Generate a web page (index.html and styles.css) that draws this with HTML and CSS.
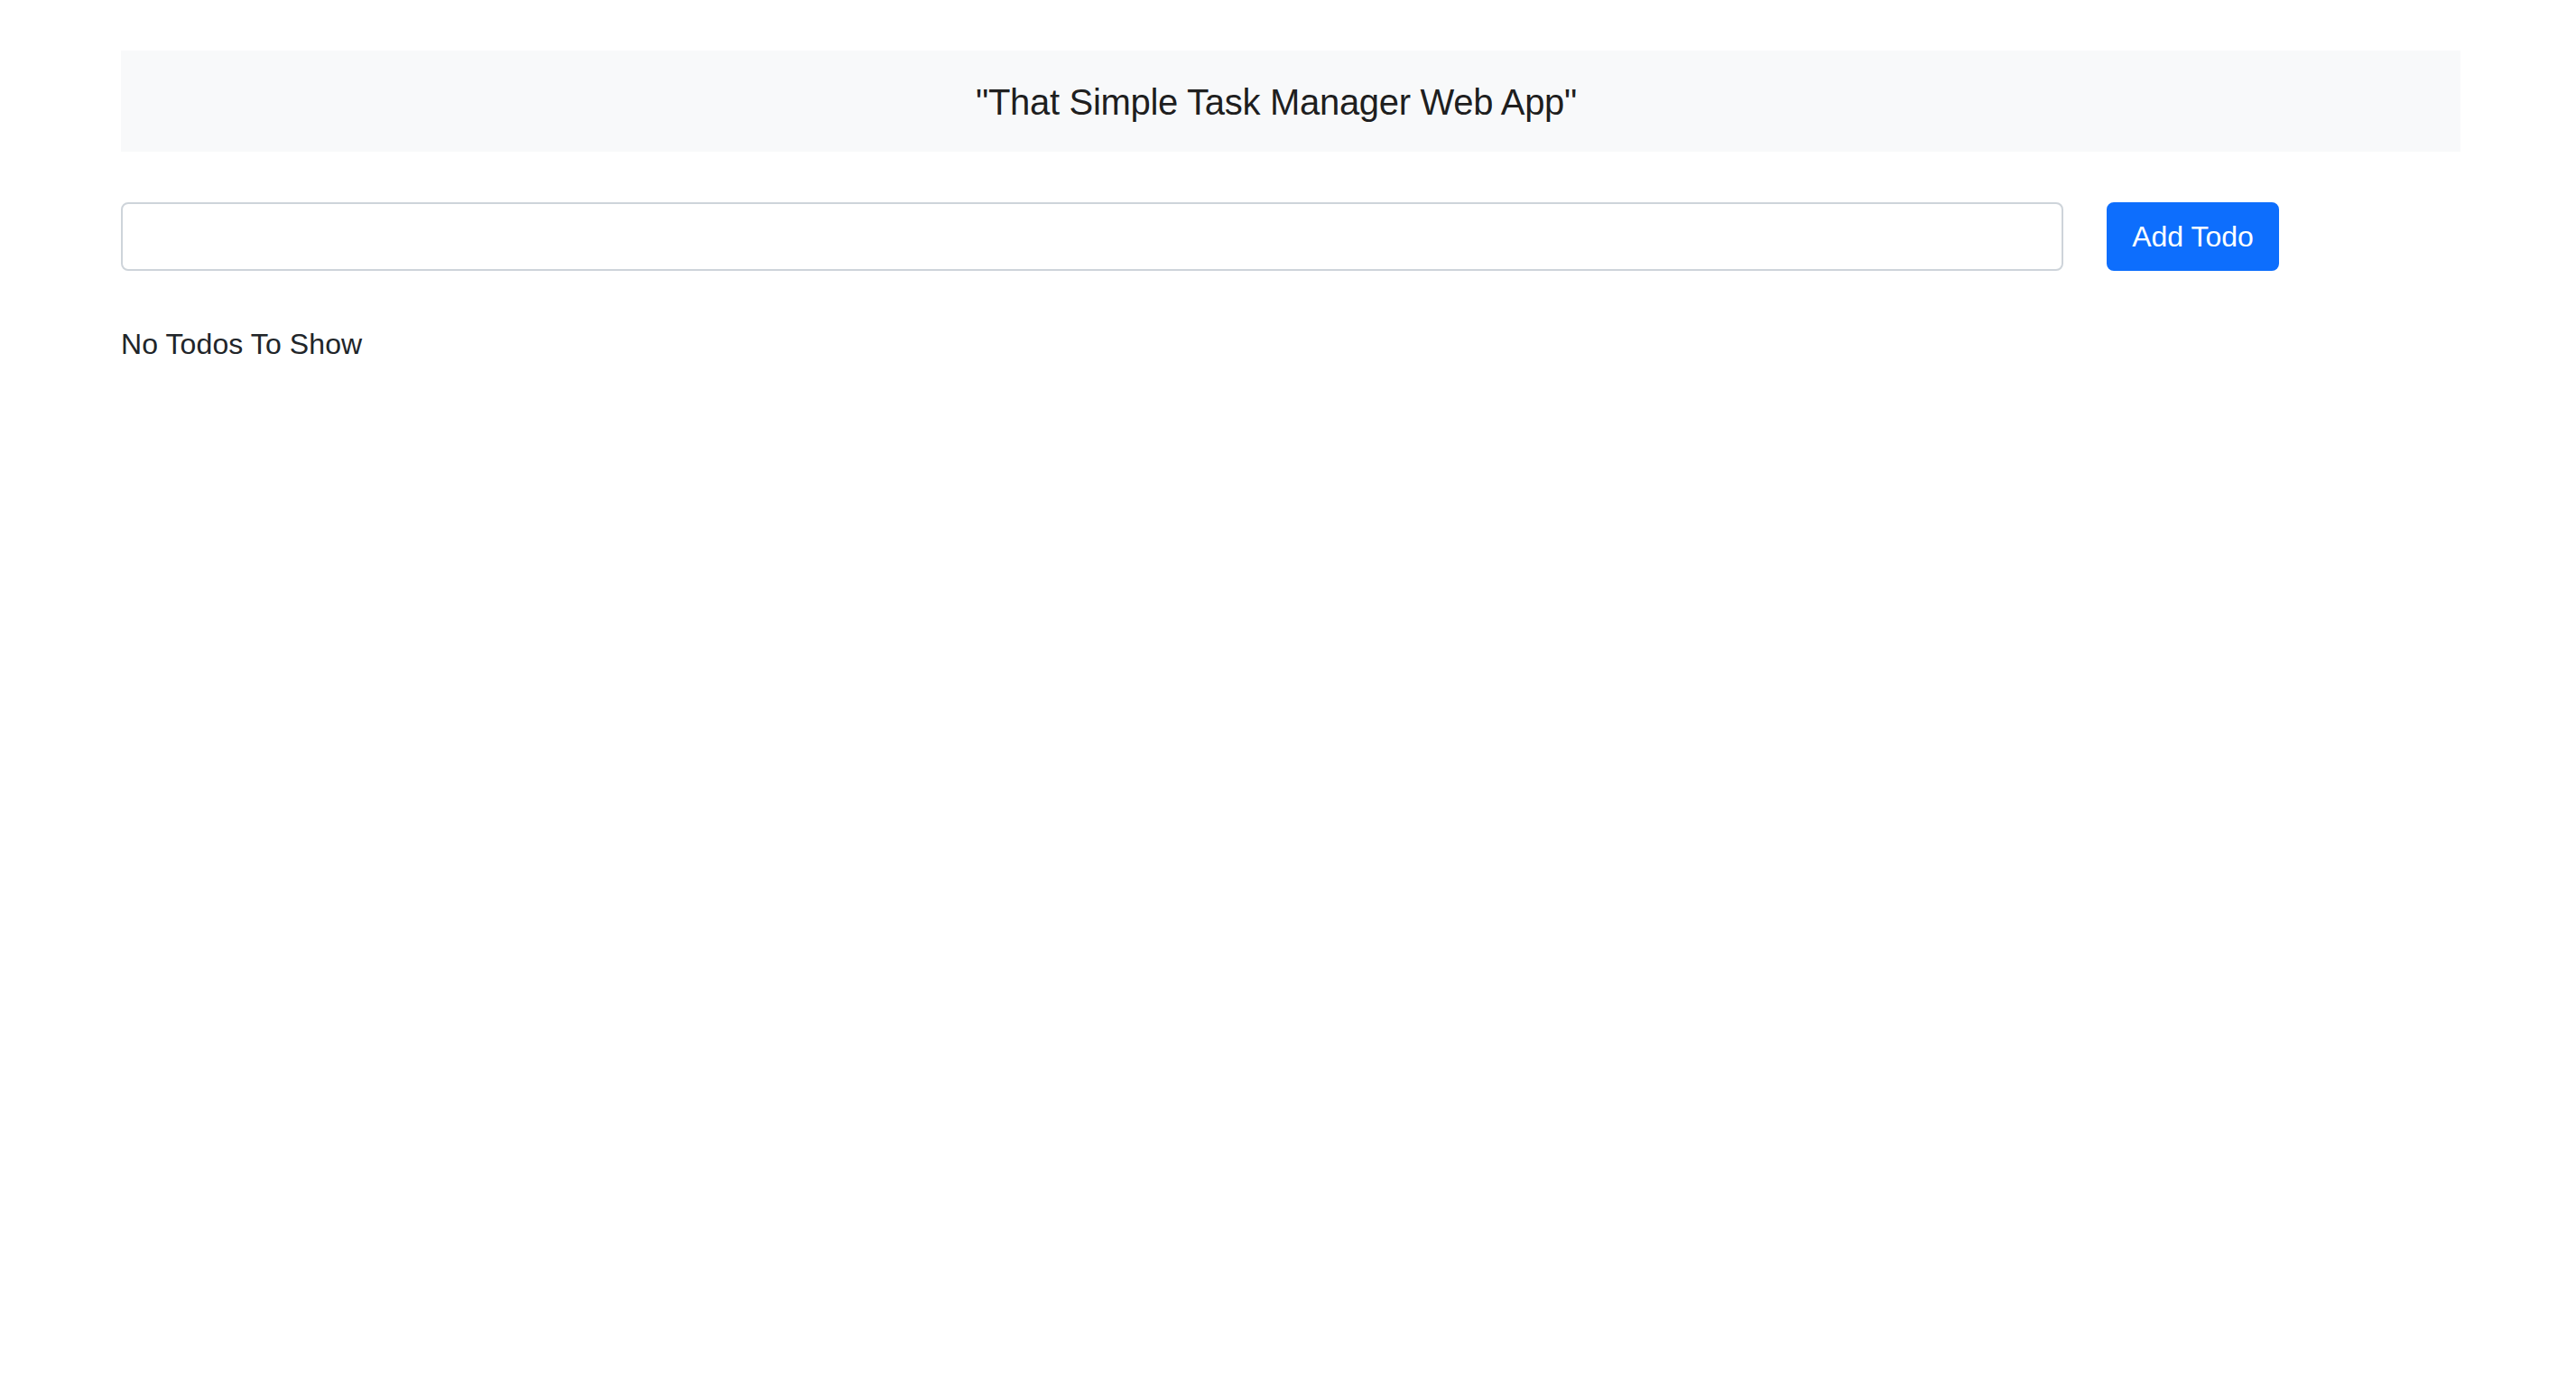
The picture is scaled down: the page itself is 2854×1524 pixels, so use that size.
FILE: index.html
```html
<!DOCTYPE html>
<html lang="en">
<head>
<meta charset="utf-8">
<title>That Simple Task Manager Web App</title>
<link rel="stylesheet" href="styles.css">
</head>
<body>
<div class="page">
  <nav class="navbar">
    <span class="brand">"That Simple Task Manager Web App"</span>
  </nav>
  <form class="todo-form">
    <input class="todo-input" type="text" aria-label="New todo">
    <button class="btn-add" type="button">Add Todo</button>
  </form>
  <p class="empty">No Todos To Show</p>
</div>
</body>
</html>
```

FILE: styles.css
```css
html, body {
  margin: 0;
  padding: 0;
  background: #ffffff;
}

body {
  font-family: "Liberation Sans", Arial, sans-serif;
  color: #212529;
}

.page {
  padding: 56px 128px 0 134px;
}

.navbar {
  height: 112px;
  background: #f8f9fa;
  display: flex;
  align-items: center;
  justify-content: center;
}

.brand {
  font-size: 40px;
  line-height: 60px;
  color: rgba(0, 0, 0, 0.9);
  margin-right: 32px;
  padding-top: 2px;
  letter-spacing: -0.3px;
}

.todo-form {
  margin: 56px 0 0 0;
  display: flex;
  gap: 48px;
  align-items: stretch;
}

.todo-input {
  box-sizing: border-box;
  width: 2152px;
  height: 76px;
  border: 2px solid #ced4da;
  border-radius: 8px;
  background: #ffffff;
  padding: 12px 24px;
  font-size: 32px;
  font-family: inherit;
  outline: none;
}

.btn-add {
  box-sizing: border-box;
  height: 76px;
  width: 191px;
  border: 2px solid #0d6efd;
  border-radius: 8px;
  background: #0d6efd;
  color: #ffffff;
  font-family: inherit;
  font-size: 32px;
  line-height: 48px;
  padding: 12px 24px;
  cursor: pointer;
}

.empty {
  margin: 57px 0 0 0;
  font-size: 32px;
  line-height: 48px;
  letter-spacing: 0.1px;
}
```
